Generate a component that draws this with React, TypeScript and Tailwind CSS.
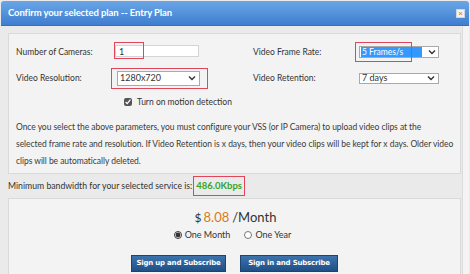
import { useState } from "react";

const Highlight = ({ className }: { className: string }) => (
  <div className={"absolute border border-[#e0455a] pointer-events-none " + className}></div>
);

const Arrow = () => (
  <svg width="8" height="6" viewBox="0 0 8 6" className="shrink-0">
    <path d="M1 1.5 L4 4.5 L7 1.5" fill="none" stroke="#333" strokeWidth="1.4" />
  </svg>
);

const noteLines = [
  "Once you select the above parameters, you must configure your VSS (or IP Camera) to upload video clips at the",
  "selected frame rate and resolution. If Video Retention is x days, then your video clips will be kept for x days. Older video",
  "clips will be automatically deleted.",
];

const App = () => {
  const [term, setTerm] = useState("month");
  const [motion, setMotion] = useState(true);

  return (
    <div className="w-[470px] h-[274px] overflow-hidden bg-[#eaeaea] font-['Lato',sans-serif] text-[#333]">
      {/* title bar */}
      <div className="ml-[1px] mr-[1px] mt-[1px] h-[25px] rounded-t-[3px] bg-gradient-to-b from-[#6aa6e6] to-[#3f7ed0] border-b border-[#3570bd] flex items-center justify-between pl-[7px] pr-[4px]">
        <span className="text-white font-bold text-[9.5px] tracking-[-0.1px]">
          Confirm your selected plan -- Entry Plan
        </span>
        <button className="w-[9px] h-[9px] bg-[#f4f4f4] border border-[#c9d6e6] flex items-center justify-center text-[#e8841c] text-[8px] leading-none font-bold">
          ×
        </button>
      </div>

      <div className="flex">
        <div className="w-[461px] pl-[8px] pt-[7px]">
          {/* settings panel */}
          <div className="h-[141px] bg-[#f3f3f3] border border-[#dadada] pl-[7px] pt-[6px] text-[8.5px]">
            <div className="flex items-center h-[24px]">
              <div className="w-[237px] flex items-center">
                <span className="w-[99px]">Number of Cameras:</span>
                <div className="relative">
                  <input
                    defaultValue="1"
                    className="w-[84px] h-[12px] bg-white border border-[#d4d4d4] px-[3px] text-[9px] leading-none outline-none"
                  />
                  <Highlight className="-left-[1px] -top-[3px] w-[30px] h-[17px]" />
                </div>
              </div>
              <div className="flex items-center">
                <span className="w-[106px]">Video Frame Rate:</span>
                <div className="relative">
                  <div className="w-[80px] h-[12px] bg-white border border-[#a9a9a9] flex items-center pl-[1px] pr-[2px]">
                    <span className="flex-1 bg-[#3399ff] text-white h-[10px] leading-[10px] pl-[1px] mr-[6px]">5 Frames/s</span>
                    <Arrow />
                  </div>
                  <Highlight className="-left-[4px] -top-[4px] w-[57px] h-[20px]" />
                </div>
              </div>
            </div>

            <div className="flex items-center h-[28px]">
              <div className="w-[237px] flex items-center">
                <span className="w-[101px]">Video Resolution:</span>
                <div className="relative">
                  <div className="w-[83px] h-[15px] bg-white border border-[#a9a9a9] flex items-center justify-between pl-[2px] pr-[3px] text-[9px]">
                    <span>1280x720</span>
                    <Arrow />
                  </div>
                  <Highlight className="-left-[6px] -top-[3px] w-[97px] h-[21px]" />
                </div>
              </div>
              <div className="flex items-center">
                <span className="w-[106px]">Video Retention:</span>
                <div className="w-[80px] h-[11px] bg-white border border-[#a9a9a9] flex items-center justify-between pl-[2px] pr-[3px] text-[9px]">
                  <span>7 days</span>
                  <Arrow />
                </div>
              </div>
            </div>

            <label className="flex items-center h-[20px] pl-[108px] gap-[5px]">
              <input
                type="checkbox"
                checked={motion}
                onChange={() => setMotion(!motion)}
                className="w-[8px] h-[8px] m-0 accent-[#555]"
              />
              <span>Turn on motion detection</span>
            </label>

            <div className="mt-[7px] leading-[17px] text-[8.5px] tracking-[-0.05px] text-[#3a3a3a]">
              {noteLines.map((line) => (
                <div key={line} className="whitespace-nowrap">
                  {line}
                </div>
              ))}
            </div>
          </div>

          {/* bandwidth */}
          <div className="h-[24px] flex items-center text-[8.7px]">
            <span>Minimum bandwidth for your selected service is:</span>
            <span className="relative ml-[3px] text-[#3aa31c] font-bold text-[9.5px] px-[1px]">
              486.0Kbps
              <span className="absolute -left-[2px] -right-[2px] -top-[3px] -bottom-[3px] border border-[#e0455a]"></span>
            </span>
          </div>

          {/* price panel */}
          <div className="h-[80px] bg-[#f3f3f3] border border-[#dadada] flex flex-col items-center pt-[9px]">
            <div className="text-[13px] leading-[18px] ml-[2px]">
              <span className="text-[#333] text-[12px]">$</span>
              <span className="text-[#d97a1c] ml-[2px]">8.08</span>
              <span className="ml-[3px]">/Month</span>
            </div>
            <div className="flex items-center gap-[14px] text-[9px] mt-[1px] mr-[4px]">
              <label className="flex items-center gap-[3px]">
                <input
                  type="radio"
                  name="term"
                  checked={term === "month"}
                  onChange={() => setTerm("month")}
                  className="w-[8px] h-[8px] m-0 accent-[#333]"
                />
                One Month
              </label>
              <label className="flex items-center gap-[3px]">
                <input
                  type="radio"
                  name="term"
                  checked={term === "year"}
                  onChange={() => setTerm("year")}
                  className="w-[8px] h-[8px] m-0 accent-[#333]"
                />
                One Year
              </label>
            </div>
            <div className="flex gap-[14px] mt-[13px]">
              <button className="w-[95px] h-[17px] bg-gradient-to-b from-[#3d73ad] to-[#1f4f85] border border-[#1b4472] text-white font-['DejaVu_Sans',sans-serif] font-bold text-[7px] tracking-[-0.2px]">
                Sign up and Subscribe
              </button>
              <button className="w-[98px] h-[17px] bg-gradient-to-b from-[#3d73ad] to-[#1f4f85] border border-[#1b4472] text-white font-['DejaVu_Sans',sans-serif] font-bold text-[7px] tracking-[-0.2px]">
                Sign in and Subscribe
              </button>
            </div>
          </div>
        </div>
        <div className="ml-[1px] w-[7px] h-[260px] bg-[#f4f4f4] border-l border-[#dcdcdc]"></div>
      </div>
    </div>
  );
};

export default App;
